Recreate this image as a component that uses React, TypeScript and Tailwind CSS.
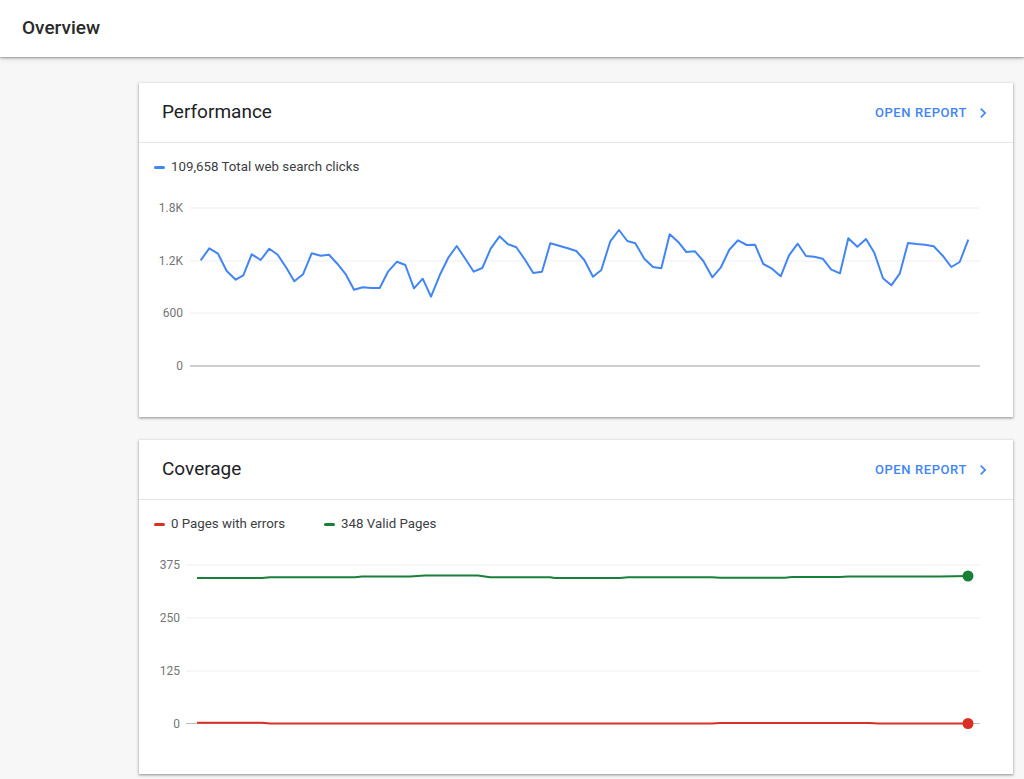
import React from "react";

const perf: [number, number][] = [
  [200.7, 259.3], [209.3, 247.3], [218, 252.7], [226.7, 270], [235.7, 278.7], [243.3, 274.3],
  [251.7, 253.3], [260.7, 259], [269.3, 247.7], [277.7, 253.7], [286, 266.3], [294.3, 280.3],
  [303, 273.3], [311.7, 252.3], [320.7, 254.7], [329, 253.7], [337.3, 262.7], [346, 273.7],
  [354, 288.7], [362.7, 286.3], [371.3, 287], [379.7, 287], [388, 270.7], [397, 260.7],
  [405.3, 264], [414, 287.3], [422.7, 277.7], [431, 295.7], [439.7, 274.3], [448.3, 256.7],
  [456.7, 245], [465.3, 257.7], [473.7, 270.7], [482.3, 267], [490.7, 247.7], [499.5, 235.3],
  [508, 243.3], [516.3, 246.3], [524.7, 258.3], [533.3, 272], [542, 270.7], [550.3, 242.3],
  [559, 244.7], [567.7, 247.3], [576.3, 250], [584.3, 259], [593, 275.7], [601.3, 269],
  [610.3, 240.3], [619, 229], [627.3, 240], [635.3, 242.3], [644.3, 257.7], [653, 266],
  [661.3, 267.3], [669.7, 233.3], [678, 240.7], [686.3, 251], [695, 250.3], [703.3, 260],
  [712.3, 276.3], [720.7, 266.7], [729.3, 248.7], [738, 239.3], [746.7, 244], [755, 243.7],
  [763.3, 263], [772, 267.7], [780.7, 275.3], [789, 254.3], [797.7, 242.7], [806, 255],
  [814.3, 255.7], [822.7, 257.7], [831.3, 268.7], [840, 272.3], [848.3, 237.3], [857.3, 245.7],
  [866, 238], [874.3, 251.7], [883, 277.3], [891.3, 284.3], [899.7, 272.7], [908, 242],
  [916.7, 243], [925, 243.7], [933.7, 245.3], [942.7, 254.7], [951.3, 266], [959.7, 261],
  [968.3, 238.7],
];

const green: [number, number][] = [
  [197, 578], [262, 578], [270, 577.3], [355, 577.3], [362, 576.5], [410, 576.5], [425, 575.5],
  [478, 575.5], [490, 577.3], [550, 577.3], [555, 578], [620, 578], [628, 577.3], [712, 577.3],
  [720, 577.8], [785, 577.8], [792, 577], [840, 577], [848, 576.5], [940, 576.5], [968, 576],
];

const red: [number, number][] = [
  [197, 722.7], [262, 722.7], [270, 723.5], [712, 723.5], [720, 723], [870, 723], [878, 723.5],
  [968, 723.5],
];

const pts = (a: [number, number][]) => a.map(([x, y]) => `${x},${y}`).join(" ");

function Chevron() {
  return (
    <svg width="20" height="20" viewBox="0 0 24 24" className="fill-[#4285f4]">
      <path d="M10 6L8.59 7.41 13.17 12l-4.58 4.59L10 18l6-6z" />
    </svg>
  );
}

function CardHeader({ title }: { title: string }) {
  return (
    <div className="flex h-[60px] items-center justify-between border-b border-[#e4e4e4] pl-[23px] pr-[20px]">
      <div className="text-[19px] text-[#202124]">{title}</div>
      <div className="flex items-center gap-[6px]">
        <span className="text-[13px] font-medium uppercase tracking-[0.6px] text-[#4285f4]">Open report</span>
        <Chevron />
      </div>
    </div>
  );
}

function Legend({ color, label }: { color: string; label: string }) {
  return (
    <div className="flex items-center gap-[6px]">
      <span className={`h-[3px] w-[11px] rounded-full ${color}`} />
      <span className="text-[13.3px] text-[#3c4043]">{label}</span>
    </div>
  );
}

export default function App() {
  const label = { fontSize: 12, fill: "#757575", fontFamily: "Roboto, sans-serif" } as const;
  return (
    <div className="min-h-[779px] bg-[#f7f7f7] font-['Roboto',sans-serif]">
      <div className="relative z-10 flex h-[57px] items-center bg-white pl-[22px] shadow-[0_1px_2px_rgba(0,0,0,0.35),0_2px_6px_rgba(0,0,0,0.12)]">
        <span className="text-[19px] font-medium text-[#2a2a2a]">Overview</span>
      </div>
      <div className="flex flex-col gap-[23px] pl-[139px] pr-[11px] pt-[26px]">
        <div className="w-[874px] bg-white shadow-[0_1px_2px_rgba(0,0,0,0.3),0_1px_3px_1px_rgba(0,0,0,0.12)]">
          <CardHeader title="Performance" />
          <div className="flex h-[48px] items-center pl-[15px]">
            <Legend color="bg-[#4285f4]" label="109,658 Total web search clicks" />
          </div>
          <svg width="874" height="226" viewBox="139 190 874 226" className="block">
            {[207, 260, 312].map((y) => (
              <line key={y} x1="190" x2="980" y1={y} y2={y} stroke="#eeeeee" strokeWidth="1" />
            ))}
            <line x1="190" x2="980" y1="365" y2="365" stroke="#9e9e9e" strokeWidth="1" />
            <text x="183" y="207" textAnchor="end" dominantBaseline="central" style={label}>1.8K</text>
            <text x="183" y="260" textAnchor="end" dominantBaseline="central" style={label}>1.2K</text>
            <text x="183" y="312" textAnchor="end" dominantBaseline="central" style={label}>600</text>
            <text x="183" y="365" textAnchor="end" dominantBaseline="central" style={label}>0</text>
            <polyline points={pts(perf)} fill="none" stroke="#4285f4" strokeWidth="2" strokeLinejoin="round" />
          </svg>
        </div>

        <div className="w-[874px] bg-white shadow-[0_1px_2px_rgba(0,0,0,0.3),0_1px_3px_1px_rgba(0,0,0,0.12)]">
          <CardHeader title="Coverage" />
          <div className="flex h-[48px] items-center gap-[39px] pl-[15px]">
            <Legend color="bg-[#d93025]" label="0 Pages with errors" />
            <Legend color="bg-[#188038]" label="348 Valid Pages" />
          </div>
          <svg width="874" height="226" viewBox="139 548 874 226" className="block">
            {[565, 618, 671].map((y) => (
              <line key={y} x1="186" x2="980" y1={y} y2={y} stroke="#eeeeee" strokeWidth="1" />
            ))}
            <line x1="186" x2="980" y1="723.5" y2="723.5" stroke="#bdbdbd" strokeWidth="1" />
            <text x="180" y="565" textAnchor="end" dominantBaseline="central" style={label}>375</text>
            <text x="180" y="618" textAnchor="end" dominantBaseline="central" style={label}>250</text>
            <text x="180" y="671" textAnchor="end" dominantBaseline="central" style={label}>125</text>
            <text x="180" y="723.5" textAnchor="end" dominantBaseline="central" style={label}>0</text>
            <polyline points={pts(green)} fill="none" stroke="#188038" strokeWidth="2" strokeLinejoin="round" />
            <polyline points={pts(red)} fill="none" stroke="#d93025" strokeWidth="2" strokeLinejoin="round" />
            <circle cx="968" cy="576" r="5.5" fill="#188038" />
            <circle cx="968" cy="723.5" r="5.5" fill="#d93025" />
          </svg>
        </div>
      </div>
    </div>
  );
}
